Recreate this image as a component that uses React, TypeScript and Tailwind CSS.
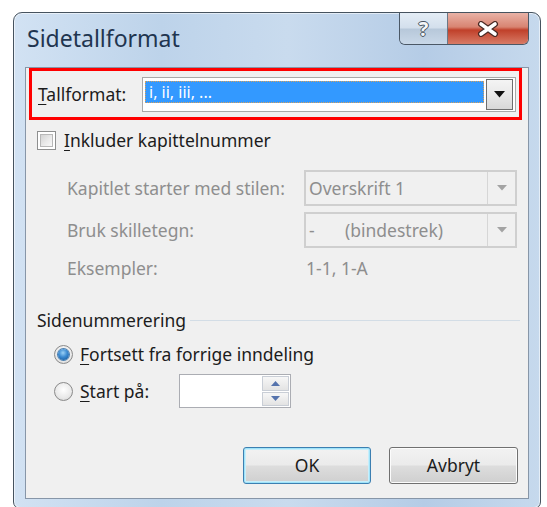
import React from 'react';

// Underlined access-key letter inside a label
const Key: React.FC<{ children: React.ReactNode }> = ({ children }) => (
  <span className="underline decoration-1 underline-offset-[3px]">{children}</span>
);

const DisabledCombo: React.FC<{ children: React.ReactNode }> = ({ children }) => (
  <div className="flex h-[36px] w-[213px] border-2 border-[#cfcfcf] bg-[#f0f0f0]">
    <div className="flex flex-1 items-center pl-[3px] text-[#8e8e8e]">{children}</div>
    <div className="flex w-[28px] items-center justify-center border-l border-[#d6d6d6]">
      <svg width="10" height="6" viewBox="0 0 10 6">
        <path d="M0 0 H10 L5 5.5 Z" fill="#a3a3a3" />
      </svg>
    </div>
  </div>
);

const Radio: React.FC<{ checked?: boolean }> = ({ checked }) => (
  <div className="flex h-[19px] w-[19px] items-center justify-center rounded-full border border-[#8a8a8a] bg-[radial-gradient(circle_at_50%_40%,#ffffff_0%,#e9e9e9_60%,#cfcfcf_100%)]">
    {checked && (
      <div className="h-[11px] w-[11px] rounded-full bg-[radial-gradient(circle_at_45%_35%,#9ad0f5_0%,#3b8ad1_45%,#0e4f91_100%)] shadow-[0_0_0_1px_#4a7fb0]" />
    )}
  </div>
);

const App: React.FC = () => {
  return (
    <div className="min-h-screen bg-white pl-[13px] pt-[12px] font-['Noto_Sans','Open_Sans',sans-serif] text-[17.5px] text-[#1c1c1c]">
      <div className="flex h-[497px] w-[528px] flex-col rounded-t-[9px] rounded-b-[7px] border border-[#46535f] bg-[linear-gradient(90deg,#d2e2f3_0%,#bdd3ea_28%,#c9dbee_52%,#b5cce6_78%,#c6d9ed_100%)] px-[11px] pb-[9px] shadow-[inset_0_0_0_1px_rgba(255,255,255,0.55)]">
        {/* title bar */}
        <div className="flex h-[54px] items-start justify-between">
          <span className="ml-[2px] mt-[12px] text-[23px] leading-[26px] text-[#1f3550]">Sidetallformat</span>
          <div className="flex h-[32px] overflow-hidden rounded-b-[6px] border border-t-0 border-[#4b5866]">
            <div className="flex w-[48px] items-center justify-center border-r border-[#6b7886] bg-[linear-gradient(180deg,#e4edf6_0%,#d3dfec_48%,#b7c8da_52%,#c9d8e8_100%)]">
              <span className="text-[20px] font-bold leading-none text-[#f4f6f8] [text-shadow:1px_0_0_#46525e,-1px_0_0_#46525e,0_1px_0_#46525e,0_-1px_0_#46525e]">?</span>
            </div>
            <div className="flex w-[80px] items-center justify-center bg-[linear-gradient(180deg,#e9b2a6_0%,#d88472_45%,#c0402a_55%,#d87b66_100%)]">
              <svg width="22" height="16" viewBox="0 0 22 16">
                <path d="M4 3 L18 13 M18 3 L4 13" stroke="#4a2a24" strokeWidth="6" strokeLinecap="round" />
                <path d="M4 3 L18 13 M18 3 L4 13" stroke="#ffffff" strokeWidth="3.6" strokeLinecap="round" />
              </svg>
            </div>
          </div>
        </div>

        {/* dialog body */}
        <div className="flex flex-1 flex-col border border-[#8796a8] bg-[#f0f0f0]">
          <div className="ml-[3px] flex h-[52px] w-[493px] items-center border-[3px] border-[#ff0000] pl-[6px]">
            <span className="w-[104px]">
              <Key>T</Key>allformat:
            </span>
            <div className="flex h-[35px] w-[374px] border border-[#a9a9a9] bg-white p-[2px]">
              <div className="mt-[1px] h-[22px] flex-1 border border-dotted border-[#d9a15a] bg-[#3399ff] pl-[3px] text-[16px] leading-[20px] text-white">
                i, ii, iii, ...
              </div>
              <div className="-my-[1px] ml-[2px] flex w-[27px] items-center justify-center border border-[#6e6e6e] bg-[linear-gradient(180deg,#f4f4f4_0%,#e9e9e9_50%,#d8d8d8_100%)]">
                <svg width="11" height="7" viewBox="0 0 11 7">
                  <path d="M0 0 H11 L5.5 6.5 Z" fill="#111111" />
                </svg>
              </div>
            </div>
          </div>

          <div className="ml-[11px] mt-[10px] flex h-[20px] items-center gap-[8px]">
            <div className="h-[19px] w-[19px] border border-[#8e8f8f] bg-white p-[2px]">
              <div className="h-full w-full border border-[#b8b8b8] bg-[linear-gradient(135deg,#d4d4d4_0%,#ececec_60%,#f8f8f8_100%)]" />
            </div>
            <span>
              <Key>I</Key>nkluder kapittelnummer
            </span>
          </div>

          <div className="ml-[41px] mt-[20px] grid grid-cols-[237px_213px] gap-y-[6px] text-[#8e8e8e]">
            <span className="flex items-center">Kapitlet starter med stilen:</span>
            <DisabledCombo>Overskrift 1</DisabledCombo>
            <span className="flex items-center">Bruk skilletegn:</span>
            <DisabledCombo>
              <span className="w-[36px]">-</span>
              <span>(bindestrek)</span>
            </DisabledCombo>
            <span className="flex h-[28px] items-center">Eksempler:</span>
            <span className="flex h-[28px] items-center pl-[2px]">1-1, 1-A</span>
          </div>

          <div className="ml-[11px] mr-[8px] mt-[26px] flex h-[24px] items-center gap-[4px]">
            <span>Sidenummerering</span>
            <div className="h-px flex-1 bg-[#d3dde6]" />
          </div>

          <div className="ml-[28px] mt-[10px] flex h-[24px] items-center gap-[7px]">
            <Radio checked />
            <span>
              <Key>F</Key>ortsett fra forrige inndeling
            </span>
          </div>

          <div className="ml-[28px] mt-[8px] flex h-[34px] items-center gap-[7px]">
            <Radio />
            <span className="w-[92px]">
              <Key>S</Key>tart på:
            </span>
            <div className="flex h-[34px] w-[112px] justify-end border border-[#abadb3] bg-white p-[1px]">
              <div className="flex w-[27px] flex-col gap-px">
                <div className="flex flex-1 items-center justify-center border border-[#c9ced6] bg-[linear-gradient(180deg,#f7f7f7_0%,#e3e3e3_100%)]">
                  <svg width="9" height="5" viewBox="0 0 9 5">
                    <path d="M0 5 H9 L4.5 0 Z" fill="#5573ad" />
                  </svg>
                </div>
                <div className="flex flex-1 items-center justify-center border border-[#c9ced6] bg-[linear-gradient(180deg,#f7f7f7_0%,#e3e3e3_100%)]">
                  <svg width="9" height="5" viewBox="0 0 9 5">
                    <path d="M0 0 H9 L4.5 5 Z" fill="#5573ad" />
                  </svg>
                </div>
              </div>
            </div>
          </div>

          <div className="mt-[39px] flex justify-end gap-[18px] pr-[10px]">
            <button className="h-[37px] w-[128px] rounded-[3px] border border-[#3c7fb1] bg-[linear-gradient(180deg,#f2f2f2_0%,#ebebeb_48%,#dddddd_52%,#cfcfcf_100%)] text-[#1c1c1c] shadow-[inset_0_0_0_1px_#9fe3f9,inset_0_0_0_2px_#c8eefb]">
              OK
            </button>
            <button className="h-[37px] w-[129px] rounded-[3px] border border-[#707070] bg-[linear-gradient(180deg,#f2f2f2_0%,#ebebeb_48%,#dddddd_52%,#cfcfcf_100%)] text-[#1c1c1c] shadow-[inset_0_0_0_1px_#fcfcfc]">
              Avbryt
            </button>
          </div>
        </div>
      </div>
    </div>
  );
};

export default App;
